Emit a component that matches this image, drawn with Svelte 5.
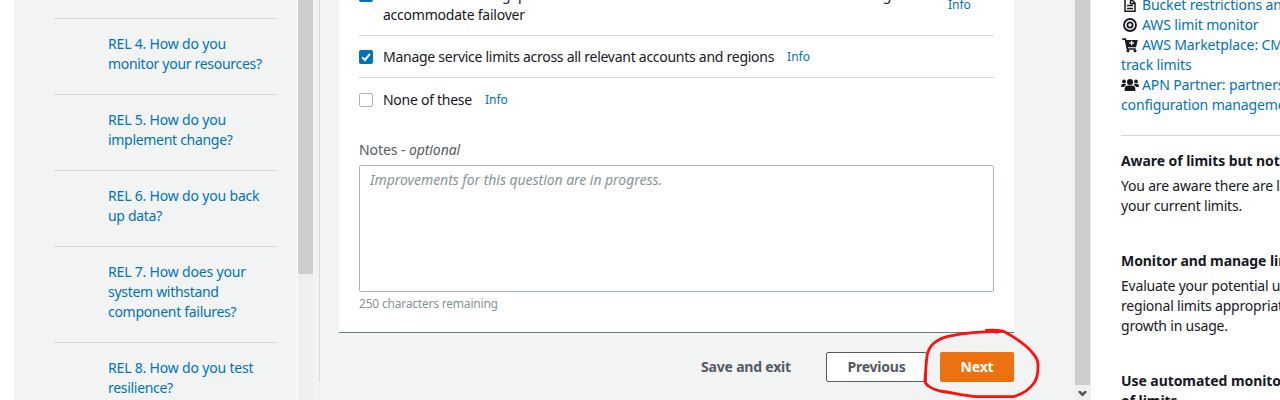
<script>
  const questions = [
    ['REL 4. How do you', 'monitor your resources?'],
    ['REL 5. How do you', 'implement change?'],
    ['REL 6. How do you back', 'up data?'],
    ['REL 7. How does your', 'system withstand', 'component failures?'],
    ['REL 8. How do you test', 'resilience?']
  ];
</script>

<div class="page">
  <aside class="side">
    <nav>
      {#each questions as lines}
        <a class="question">
          {#each lines as line}<span>{line}</span>{/each}
        </a>
      {/each}
    </nav>
    <div class="track"><div class="thumb"></div></div>
  </aside>

  <main>
    <div class="rule"></div>
    <div class="content">
      <section class="card">
        <div class="option first">
          <span class="box on"><svg viewBox="0 0 14 14"><path d="M3.2 7.2 6 10l5-6.2" /></svg></span>
          <span class="label wide"><span>Ensure a sufficient gap between the current service limit and the maximum usage to</span><span class="loose">accommodate failover</span></span>
          <a class="info">Info</a>
        </div>
        <div class="option second">
          <span class="box on"><svg viewBox="0 0 14 14"><path d="M3.2 7.2 6 10l5-6.2" /></svg></span>
          <span class="label">Manage service limits across all relevant accounts and regions</span>
          <a class="info">Info</a>
        </div>
        <div class="option third">
          <span class="box"></span>
          <span class="label">None of these</span>
          <a class="info">Info</a>
        </div>
        <div class="notes">Notes - <i>optional</i></div>
        <div class="area">Improvements for this question are in progress.</div>
        <div class="remaining">250 characters remaining</div>
      </section>
      <div class="actions">
        <span class="btn link">Save and exit</span>
        <span class="btn prev">Previous</span>
        <span class="btn next">Next</span>
        <svg class="mark" viewBox="0 0 124 76">
          <path d="M66 5.300 C72 4.800 77 5 82 5.800 C87 8 92 11 97 14.300 C104 19 109 23 113 28.500 C117 33 118.500 37 118 42 C118 48 117 54 114 58 C109 65 102 69.500 93 71.700 L57 71.700 C44 70.500 32 67.500 20 66 C14 64.500 11 63 8.500 61 C5.500 59 4.500 57 5 54 C6 45 6 35 7.500 28.500 C9 24 10.500 21 13 19 C17 15.500 22 13 27 11.700 C36 9.500 44 8.300 53 7.700 C61 7.500 70 6 78 7" />
        </svg>
      </div>
    </div>
  </main>

  <div class="scroll">
    <div class="bar"></div>
    <svg viewBox="0 0 15 15"><path d="M3.500 6h2l2 2 2-2h2v1.500l-4 4-4-4z" /></svg>
  </div>

  <aside class="help">
    <div class="links">
      <a><svg viewBox="0 0 18 16"><path d="M4 2h6l4 4v8.200H4zM9.500 2v4.500H14M6 8.500h6M6 11.500h6" fill="none" stroke="#16191f" stroke-width="1.5" /></svg><span>Bucket restrictions and limitations</span></a>
      <a><svg viewBox="0 0 18 16"><g fill="none" stroke="#16191f" stroke-width="1.8"><circle cx="9" cy="8" r="6" /><circle cx="9" cy="8" r="2.600" /></g></svg><span>AWS limit monitor</span></a>
      <a><svg viewBox="0 0 18 16"><path fill="#16191f" d="M1.300 1.300H5l.5 1.700h11.200l-1.600 7.200H7l.2 1h7.500v1.600H5.700L3.700 2.900H1.300z" /><circle cx="7" cy="13.800" r="1.500" fill="#16191f" /><circle cx="14" cy="13.800" r="1.500" fill="#16191f" /><path d="M10.600 3.800v4.400M8.400 6h4.400" stroke="#fff" stroke-width="1.300" /></svg><span>AWS Marketplace: CMDB to</span></a>
      <a><span>track limits</span></a>
      <a><svg viewBox="0 0 18 16"><g fill="#16191f"><circle cx="9" cy="5" r="3" /><circle cx="3" cy="4.500" r="1.900" /><circle cx="15" cy="4.500" r="1.900" /><path d="M3.700 14v-2.200c0-2 1.500-3.200 3-3.200h4.600c1.500 0 3 1.200 3 3.200V14zM.2 10V8.500c0-1 .8-1.600 1.700-1.600h2.400c.6 0 1 .2 1.300.6C4.200 8.200 3.400 9 3.100 10zM17.800 10V8.500c0-1-.8-1.600-1.700-1.600h-2.400c-.6 0-1 .2-1.300.6 1.400.7 2.200 1.500 2.500 2.500z" /></g></svg><span>APN Partner: partners for</span></a>
      <a><span>configuration management</span></a>
    </div>
    <section class="topic">
      <h3>Aware of limits but not tracking</h3>
      <p>You are aware there are limits but</p>
      <p>your current limits.</p>
    </section>
    <section class="topic">
      <h3>Monitor and manage limits</h3>
      <p>Evaluate your potential usage and</p>
      <p>regional limits appropriately for</p>
      <p>growth in usage.</p>
    </section>
    <section class="topic">
      <h3>Use automated monitoring</h3>
      <h3>of limits</h3>
    </section>
  </aside>
</div>

<style>
  :global(body) { margin: 0; background: #fff; overflow: hidden; }
  .page { display: flex; width: 1280px; height: 400px; overflow: hidden; font: 14px/20px "Noto Sans", sans-serif; letter-spacing: -0.2px; color: #16191f; white-space: nowrap; }
  a { color: #0073bb; }
  .side { display: flex; width: 300px; flex: none; margin-left: 14px; background: #f2f3f3; }
  nav { width: 223px; margin: 18px 20px 0 40px; flex: none; }
  .question { display: flex; flex-direction: column; padding: 15px 0 20px 54px; border-top: 1px solid #d5d8d8; letter-spacing: -0.3px; }
  .question span:first-child { letter-spacing: -0.18px; }
  .track { width: 15px; flex: none; background: #efefef; border-left: 1px solid #fff; border-right: 1px solid #f5f5f5; height: 400px; }
  .thumb { height: 274px; background: #cdcdcd; }
  main { display: flex; width: 761px; flex: none; background: #f2f3f3; }
  .rule { width: 1px; height: 382px; margin: 0 19px 0 5px; background: #d5d8d8; }
  .content { width: 675px; }
  .card { height: 332px; padding: 0 20px; background: #fff; border-bottom: 1px solid #687f7d; box-sizing: content-box; overflow: hidden; }
  .option { display: flex; box-sizing: border-box; border-bottom: 1px solid #d5d8d8; }
  .first { height: 36px; }
  .second { height: 42px; padding-top: 11px; }
  .third { height: 62px; padding-top: 12px; border: 0; }
  .box { box-sizing: border-box; width: 14px; height: 14px; margin: 3px 10px 0 0; flex: none; border: 1px solid #aab7b8; border-radius: 2px; }
  .first .box { margin-top: -12px; }
  .on { border: 0; background: #0073bb; }
  .box svg { display: block; width: 14px; height: 14px; fill: none; stroke: #fff; stroke-width: 2; }
  .label { display: flex; flex-direction: column; letter-spacing: -0.27px; }
  .loose { letter-spacing: -0.23px; }
  .wide { width: 551px; margin-top: -15px; }
  .info { margin-left: 13px; font-size: 12px; letter-spacing: 0; }
  .first .info { margin: -5px 0 0 14px; }
  .notes { height: 25px; color: #545b64; letter-spacing: -0.08px; }
  .area { box-sizing: border-box; height: 127px; padding: 4px 10px; border: 1px solid #aab7b8; border-radius: 2px; font-style: italic; letter-spacing: -0.05px; color: #879596; }
  .remaining { padding-top: 2px; font-size: 12px; color: #879596; }
  .actions { position: relative; display: flex; justify-content: flex-end; padding-top: 19px; font-weight: 700; color: #545b64; }
  .btn { box-sizing: border-box; height: 30px; line-height: 28px; border: 1px solid transparent; border-radius: 2px; text-align: center; }
  .link { width: 132px; }
  .prev { width: 101px; margin: 0 13px 0 14px; background: #fff; border-color: #545b64; }
  .next { width: 74px; background: #ec7211; color: #fff; }
  .mark { position: absolute; left: 581px; top: -8px; width: 124px; height: 76px; fill: none; stroke: #ff1010; stroke-width: 2.800; stroke-linecap: round; stroke-linejoin: round; }
  .scroll { display: flex; flex-direction: column; width: 15px; flex: none; border-right: 1px solid #efefef; background: #efefef; }
  .bar { height: 385px; background: #cdcdcd; }
  .scroll svg { width: 15px; height: 15px; fill: #505050; }
  .help { flex: 1; padding-left: 30px; margin-top: -5px; overflow: hidden; }
  .links { height: 141px; border-bottom: 1px solid #d5d8d8; box-sizing: border-box; letter-spacing: -0.12px; }
  .links a { display: flex; height: 20px; }
  .links svg { width: 18px; height: 16px; margin: 2px 3px 0 0; flex: none; }
  .topic { padding-top: 16px; margin-bottom: 19px; }
  .links + .topic { padding-top: 15px; }
  h3 { margin: 0 0 5px; font: inherit; font-weight: 700; letter-spacing: -0.07px; }
  h3 + h3 { margin-top: -5px; }
  p { margin: 0; }
</style>
